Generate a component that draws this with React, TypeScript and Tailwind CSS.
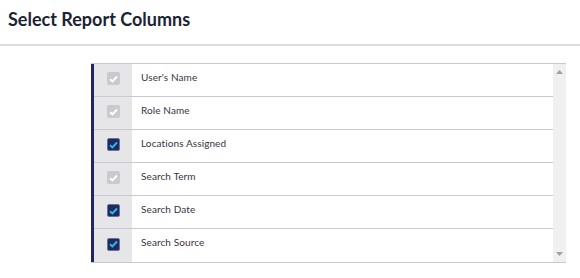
const columns = [
  { label: "User's Name", checked: true, disabled: true },
  { label: "Role Name", checked: true, disabled: true },
  { label: "Locations Assigned", checked: true, disabled: false },
  { label: "Search Term", checked: true, disabled: true },
  { label: "Search Date", checked: true, disabled: false },
  { label: "Search Source", checked: true, disabled: false },
];

function Check({ disabled }: { disabled: boolean }) {
  return (
    <div
      className={`w-[13px] h-[13px] rounded-[2px] flex items-center justify-center ${
        disabled ? "bg-[#c9c9cf]" : "bg-[#1f2a5e] border border-[#6b7194]"
      }`}
    >
      <svg width="9" height="8" viewBox="0 0 9 8">
        <path
          d="M1 4.2 L3.4 6.4 L8 1.5"
          fill="none"
          stroke={disabled ? "#ffffff" : "#2ab8ec"}
          strokeWidth="2"
        />
      </svg>
    </div>
  );
}

export default function App() {
  return (
    <div className="w-[580px] h-[278px] bg-white font-['Lato',sans-serif] overflow-hidden">
      <div className="h-[44px] px-[8px] pt-[7px]">
        <h1 className="text-[18px] font-bold text-[#1c2333] leading-[24px]">
          Select Report Columns
        </h1>
      </div>
      <div className="h-[2px] bg-[#dcdbe4]" />
      <div className="pl-[91px] pt-[17px]">
        <div className="w-[475px] h-[200px] flex border-t border-b border-[#c9c9d1]">
          <div className="flex-1 flex flex-col border-l-[3px] border-[#1f2660]">
            {columns.map((c, i) => (
              <div
                key={c.label}
                className={`h-[33px] flex ${
                  i < columns.length - 1 ? "border-b border-[#c9c9d1]" : ""
                }`}
              >
                <div className="w-[38px] bg-[#e6e6e8] flex items-center justify-center pb-[3px]">
                  <Check disabled={c.disabled} />
                </div>
                <div className="pl-[9px] pt-[6px] text-[10px] text-[#3a3340] tracking-[0.1px]">
                  {c.label}
                </div>
              </div>
            ))}
          </div>
          <div className="w-[13px] bg-[#f0f0f0] flex flex-col justify-between items-center py-[6px]">
            <svg width="7" height="4" viewBox="0 0 7 4">
              <path d="M0 4 L3.5 0 L7 4 Z" fill="#a0a0a0" />
            </svg>
            <svg width="7" height="4" viewBox="0 0 7 4">
              <path d="M0 0 L3.5 4 L7 0 Z" fill="#a0a0a0" />
            </svg>
          </div>
        </div>
      </div>
    </div>
  );
}
